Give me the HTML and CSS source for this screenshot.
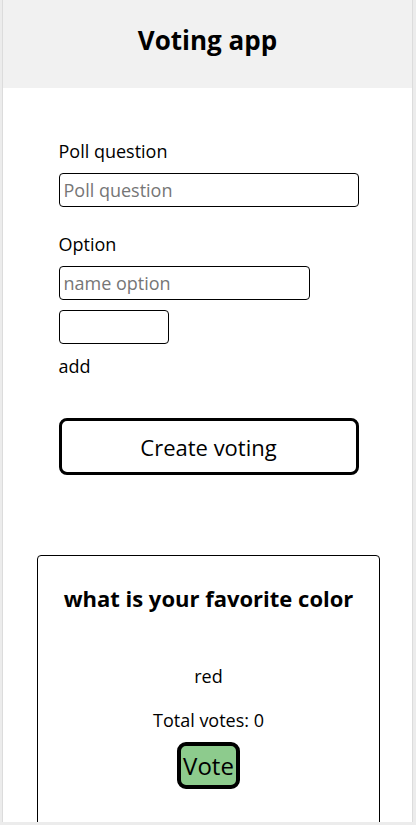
FILE: index.html
```html
<!DOCTYPE html>
<html>
<head>
<meta charset="utf-8">
<link rel="stylesheet" href="styles.css">
</head>
<body>
<div class="frame">
  <header class="header"><h1 class="title">Voting app</h1></header>
  <form class="form">
    <label class="label">Poll question</label>
    <input class="input input-wide" type="text" placeholder="Poll question">
    <label class="label label-option">Option</label>
    <input class="input input-mid" type="text" placeholder="name option">
    <input class="input input-small" type="text">
    <span class="add">add</span>
    <button type="button" class="create">Create voting</button>
  </form>
  <section class="card">
    <h2 class="question">what is your favorite color</h2>
    <p class="option">red</p>
    <p class="total">Total votes: 0</p>
    <button type="button" class="vote">Vote</button>
  </section>
</div>
</body>
</html>
```
FILE: styles.css
```css
html, body {
  margin: 0;
  padding: 0;
  background: #ececec;
}
body {
  font-family: "Open Sans", "Noto Sans", sans-serif;
  color: #000;
  height: 825px;
  overflow: hidden;
}
.frame {
  margin: 0 3px 0 2px;
  padding-left: 2px;
  background: #fff;
  height: 822px;
  overflow: hidden;
  border-left: 1px solid #dcdcdc;
  border-right: 1px solid #dcdcdc;
}
.header {
  background: #f1f1f1;
  height: 88px;
  margin-left: -2px;
  display: flex;
  align-items: center;
  justify-content: center;
}
.title {
  margin: 0;
  font-size: 26px;
  font-weight: 700;
  line-height: 36px;
  padding-bottom: 8px;
}
.form {
  width: 300px;
  margin: 51px auto 0;
  display: flex;
  flex-direction: column;
  align-items: flex-start;
}
.label {
  font-size: 18px;
  line-height: 24px;
  margin-bottom: 10px;
}
.label-option {
  margin-top: 25px;
}
.input {
  box-sizing: border-box;
  height: 34px;
  border: 1px solid #000;
  border-radius: 4px;
  font-family: inherit;
  font-size: 18px;
  padding: 0 4px;
  background: #fff;
}
.input::placeholder {
  color: #767676;
}
.input-wide { width: 300px; }
.input-mid { width: 251px; }
.input-small { width: 110px; margin-top: 10px; }
.add {
  font-size: 18px;
  line-height: 24px;
  margin-top: 10px;
}
.create {
  margin-top: 40px;
  box-sizing: border-box;
  width: 300px;
  height: 57px;
  border: 3px solid #000;
  border-radius: 8px;
  background: #fff;
  font-family: inherit;
  font-size: 22px;
  color: #000;
}
.card {
  box-sizing: border-box;
  width: 343px;
  margin: 80px auto 0;
  border: 1px solid #000;
  border-radius: 4px;
  height: 400px;
  text-align: center;
}
.question {
  margin: 27px 0 0;
  font-size: 22px;
  font-weight: 700;
  line-height: 30px;
}
.option {
  margin: 51px 0 0;
  font-size: 18px;
  line-height: 24px;
}
.total {
  margin: 20px 0 0;
  font-size: 18px;
  line-height: 24px;
}
.vote {
  margin-top: 10px;
  box-sizing: border-box;
  height: 47px;
  padding: 0 2px;
  border: 4px solid #000;
  border-radius: 9px;
  background: #8dcb8d;
  font-family: inherit;
  font-size: 24px;
  color: #000;
}
```
